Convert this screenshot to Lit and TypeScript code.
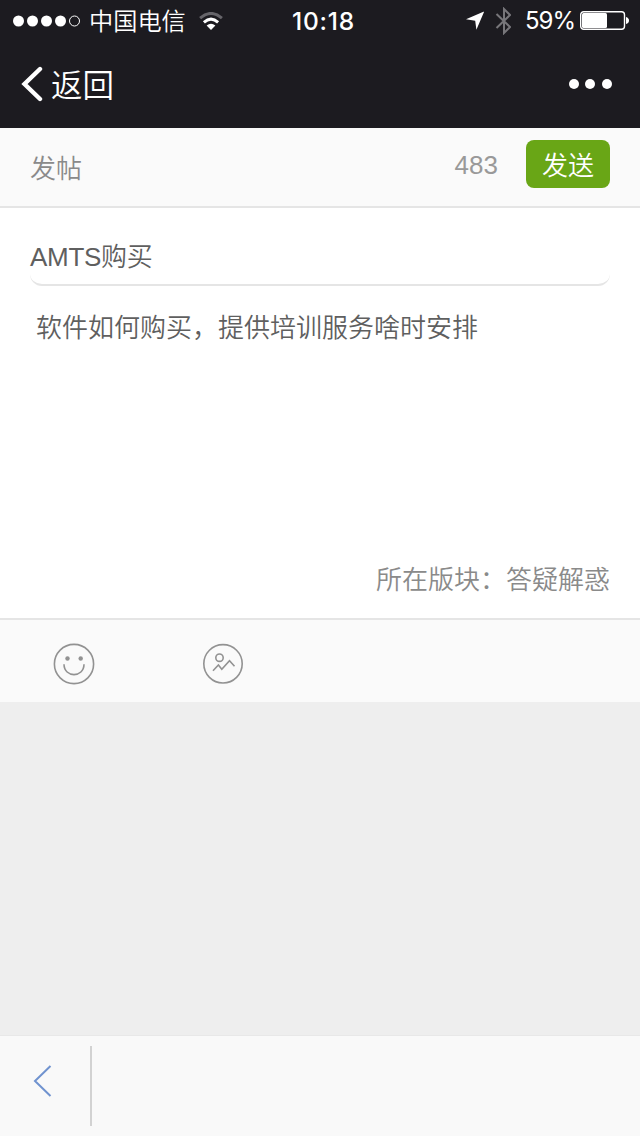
import { LitElement, html, css } from "lit";
import { customElement, property } from "lit/decorators.js";

@customElement("status-bar")
class StatusBar extends LitElement {
  @property({ type: Number }) battery = 59;

  static styles = css`
    :host { display: grid; grid-template-columns: 292px 1fr auto; height: 40px; color: #fff; }
    .side { display: flex; align-items: center; height: 41px; }
    .left { padding-left: 13px; }
    .carrier { margin: 0 13px 0 8px; padding-top: 2px; font-size: 24.2px; line-height: 36px; font-weight: 350; white-space: nowrap; }
    .time { font: 500 24.5px/42px Inter, sans-serif; letter-spacing: 0.8px; }
    .right { padding-right: 11px; }
    .bt { margin: 0 14px 0 11px; }
    .pct { font: 400 24px/41px Inter, sans-serif; letter-spacing: -1px; width: 55px; white-space: nowrap; }
    svg { display: block; flex: none; }
  `;

  render() {
    return html`
      <div class="side left">
        <svg width="68" height="12" viewBox="0 0 68 12" fill="#fff">
          <circle cx="5.5" cy="6" r="5.5" /><circle cx="19.5" cy="6" r="5.5" />
          <circle cx="33.5" cy="6" r="5.5" /><circle cx="47.5" cy="6" r="5.5" />
          <circle cx="61.5" cy="6" r="5" fill="none" stroke="#fff" />
        </svg>
        <span class="carrier">中国电信</span>
        <svg width="24" height="18" viewBox="0 0 24 18" fill="none" stroke="#fff" stroke-width="3">
          <path d="M1.1 6.1Q12-3.2 22.9 6.1" stroke="#66656a" />
          <path d="M4.9 10.3Q12 4 19.1 10.3" />
          <path d="M12 18L7.6 13.5Q12 9.8 16.4 13.5Z" fill="#fff" stroke="none" />
        </svg>
      </div>
      <div class="time">10:18</div>
      <div class="side right">
        <svg width="19" height="19" viewBox="0 0 19 19" fill="#fff"><path d="M19.3.3L11.4 18.7 10.2 9.8 1 8.2Z" /></svg>
        <svg class="bt" width="16" height="28" viewBox="0 0 16 28" fill="none" stroke="#77767a" stroke-width="2">
          <path d="M1.5 7L15 20 9 26V2L15 8 1.5 21" />
        </svg>
        <span class="pct">${this.battery}%</span>
        <svg width="49" height="19" viewBox="0 0 49 19" fill="#fff">
          <rect x=".7" y=".7" width="43.8" height="17.6" rx="3" fill="none" stroke="#fff" stroke-width="1.4" />
          <rect x="2" y="2" width="25" height="15" rx="1.5" />
          <path d="M46 6Q49 7 49 9.5T46 13Z" />
        </svg>
      </div>
    `;
  }
}

@customElement("app-root")
class AppRoot extends LitElement {
  @property() heading = "AMTS购买";
  @property() body = "软件如何购买，提供培训服务啥时安排";

  static styles = css`
    * { box-sizing: border-box; }
    :host {
      display: flex; flex-direction: column; height: 1136px; background: #eee;
      font-family: "Liberation Sans", "Noto Sans CJK SC", sans-serif; font-size: 26px; font-weight: 350;
    }
    svg { display: block; flex: none; }
    .top { height: 128px; background: #1c1b20; }
    .nav { display: flex; align-items: center; justify-content: space-between; height: 88px; padding: 0 28px 0 21px; color: #fff; }
    .back { display: flex; align-items: center; gap: 8px; font-size: 31.5px; line-height: 48px; }
    .back span { padding-top: 4px; }
    .bar { display: flex; align-items: center; height: 80px; padding: 0 30px; background: #fafafa; border-bottom: 2px solid #e5e5e5; color: #8a8a8a; }
    .name { flex: 1; padding-top: 3px; line-height: 40px; }
    .count { margin-right: 28px; padding-bottom: 4px; color: #999; line-height: 30px; }
    .send { width: 84px; height: 48px; margin-bottom: 6px; padding-top: 2px; border-radius: 8px; background: #69a616; color: #fff; text-align: center; line-height: 48px; }
    .editor { display: flex; flex-direction: column; height: 412px; padding: 20px 30px 0; background: #fff; border-bottom: 2px solid #e5e5e5; color: #5f5f5f; }
    .title { height: 58px; padding-top: 1px; border-bottom: 2px solid #e5e5e5; border-radius: 12px; line-height: 56px; letter-spacing: -0.3px; }
    .message { flex: 1; padding: 22px 6px 0; line-height: 40px; }
    .forum { padding-bottom: 18px; text-align: right; line-height: 40px; color: #8a8a8a; }
    .tools { display: flex; align-items: center; gap: 107px; height: 82px; padding: 6px 53px 0; background: #fafafa; }
    .fill { flex: 1; }
    .foot { display: flex; height: 101px; padding: 10px 0 10px 33px; background: #f9f9f9; border-top: 1px solid #e8e8e8; }
    .prev { display: flex; width: 59px; padding-top: 19px; border-right: 2px solid #d2d2d2; }
  `;

  render() {
    return html`
      <header class="top">
        <status-bar></status-bar>
        <div class="nav">
          <div class="back">
            <svg width="22" height="36" viewBox="0 0 22 36" fill="none" stroke="#fff" stroke-width="4.4" stroke-linecap="round" stroke-linejoin="miter"><path d="M19 3L3.5 18 19 33" /></svg>
            <span>返回</span>
          </div>
          <svg width="44" height="10" viewBox="0 0 44 10" fill="#fff"><circle cx="6" cy="5" r="5" /><circle cx="22" cy="5" r="5" /><circle cx="39" cy="5" r="5" /></svg>
        </div>
      </header>
      <div class="bar">
        <span class="name">发帖</span>
        <span class="count">483</span>
        <div class="send">发送</div>
      </div>
      <main class="editor">
        <div class="title">${this.heading}</div>
        <div class="message">${this.body}</div>
        <div class="forum">所在版块：答疑解惑</div>
      </main>
      <div class="tools">
        <svg width="42" height="42" viewBox="0 0 42 42" fill="none" stroke="#929292" stroke-width="1.6">
          <circle cx="21" cy="21" r="19.6" />
          <path d="M11 21.3C11 35 31 35 31 21.3" />
          <circle cx="14.5" cy="15.5" r="2.2" fill="#929292" stroke="none" /><circle cx="27.7" cy="15.5" r="2.2" fill="#929292" stroke="none" />
        </svg>
        <svg width="42" height="42" viewBox="0 0 42 42" fill="none" stroke="#929292" stroke-width="1.6">
          <circle cx="21" cy="20.8" r="19.2" />
          <circle cx="17.5" cy="14.7" r="3.7" />
          <path d="M11 27.8L16.4 22 19.8 26.3 27.5 17.8 32.5 23.2" />
        </svg>
      </div>
      <div class="fill"></div>
      <footer class="foot">
        <div class="prev">
          <svg width="19" height="32" viewBox="0 0 19 32" fill="none" stroke="#7093cf" stroke-width="2"><path d="M17.5 1L2 16 17.5 31" /></svg>
        </div>
      </footer>
    `;
  }
}
